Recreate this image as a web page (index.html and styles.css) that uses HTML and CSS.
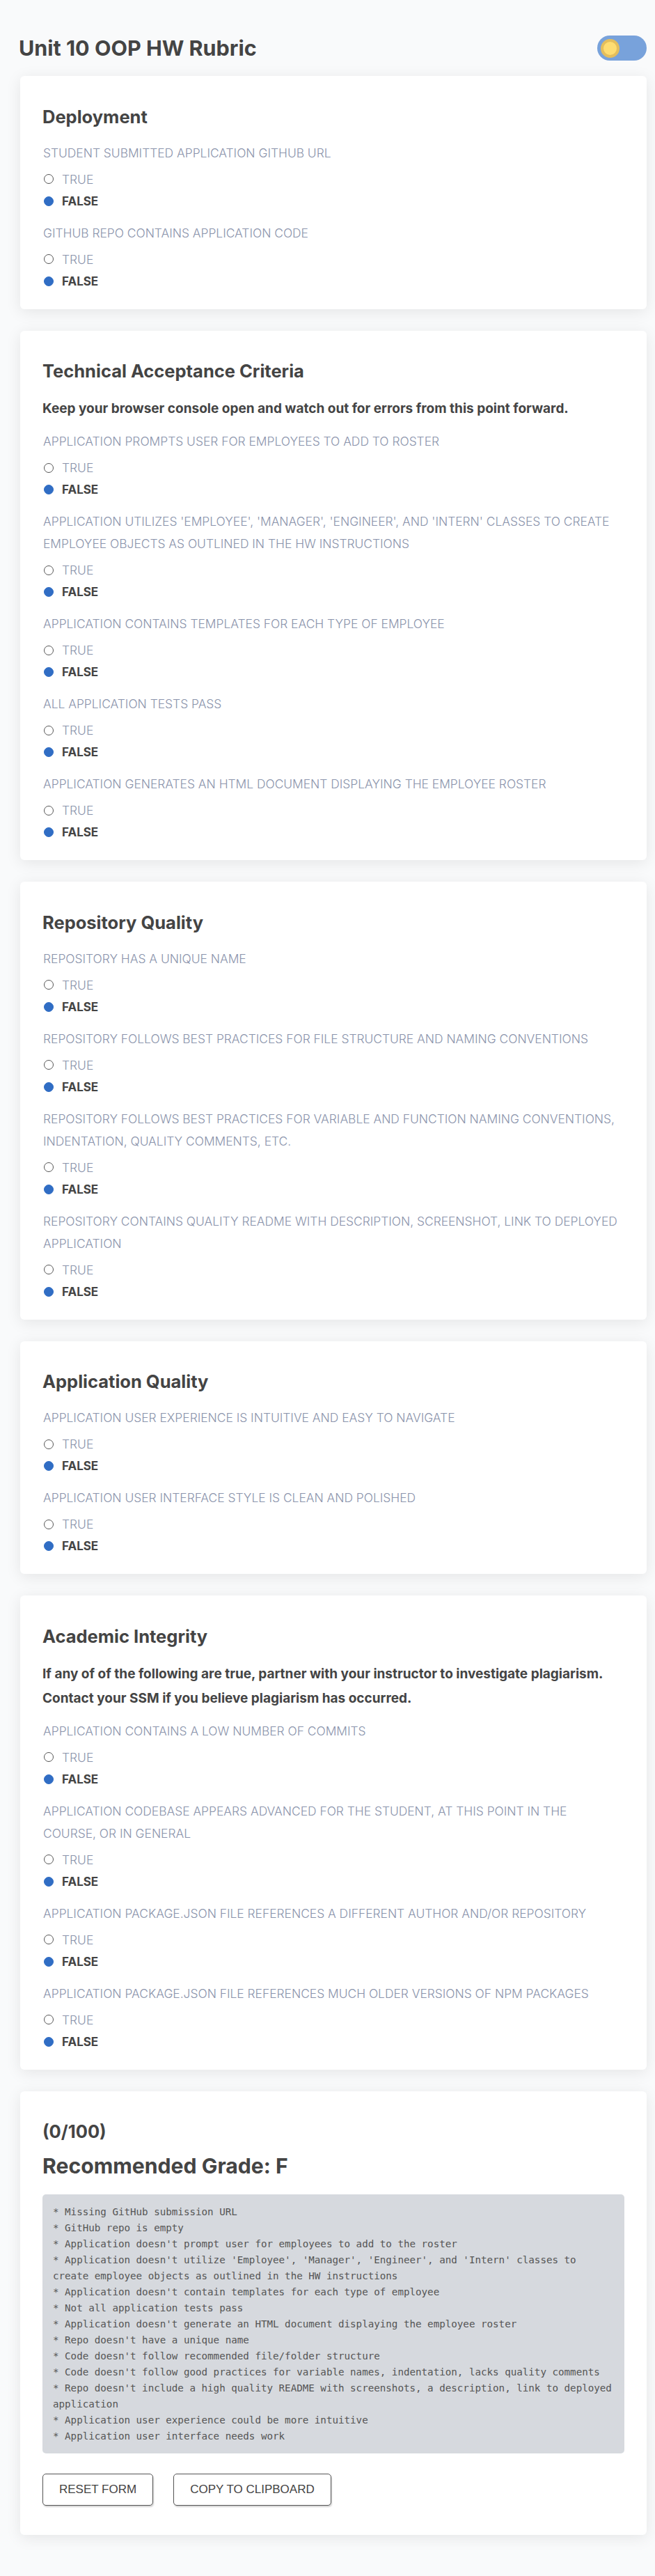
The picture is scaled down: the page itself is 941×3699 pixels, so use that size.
FILE: index.html
```html
<!DOCTYPE html>
<html lang="en">
<head>
<meta charset="utf-8">
<title>Unit 10 OOP HW Rubric</title>
<link rel="stylesheet" href="styles.css">
</head>
<body>
<div class="page">
  <header class="topbar">
    <h1 class="page-title">Unit 10 OOP HW Rubric</h1>
    <button class="theme-toggle" type="button" aria-label="Toggle theme"><span class="toggle-knob"></span></button>
  </header>

  <section class="card">
    <h2 class="card-title">Deployment</h2>
    <div class="question">
      <p class="q-label">STUDENT SUBMITTED APPLICATION GITHUB URL</p>
      <div class="options">
        <div class="option"><span class="radio"></span><span class="opt-text">TRUE</span></div>
        <div class="option is-selected"><span class="radio"></span><span class="opt-text">FALSE</span></div>
      </div>
    </div>
    <div class="question">
      <p class="q-label">GITHUB REPO CONTAINS APPLICATION CODE</p>
      <div class="options">
        <div class="option"><span class="radio"></span><span class="opt-text">TRUE</span></div>
        <div class="option is-selected"><span class="radio"></span><span class="opt-text">FALSE</span></div>
      </div>
    </div>
  </section>

  <section class="card">
    <h2 class="card-title">Technical Acceptance Criteria</h2>
    <p class="note">Keep your browser console open and watch out for errors from this point forward.</p>
    <div class="question">
      <p class="q-label">APPLICATION PROMPTS USER FOR EMPLOYEES TO ADD TO ROSTER</p>
      <div class="options">
        <div class="option"><span class="radio"></span><span class="opt-text">TRUE</span></div>
        <div class="option is-selected"><span class="radio"></span><span class="opt-text">FALSE</span></div>
      </div>
    </div>
    <div class="question">
      <p class="q-label">APPLICATION UTILIZES 'EMPLOYEE', 'MANAGER', 'ENGINEER', AND 'INTERN' CLASSES TO CREATE EMPLOYEE OBJECTS AS OUTLINED IN THE HW INSTRUCTIONS</p>
      <div class="options">
        <div class="option"><span class="radio"></span><span class="opt-text">TRUE</span></div>
        <div class="option is-selected"><span class="radio"></span><span class="opt-text">FALSE</span></div>
      </div>
    </div>
    <div class="question">
      <p class="q-label">APPLICATION CONTAINS TEMPLATES FOR EACH TYPE OF EMPLOYEE</p>
      <div class="options">
        <div class="option"><span class="radio"></span><span class="opt-text">TRUE</span></div>
        <div class="option is-selected"><span class="radio"></span><span class="opt-text">FALSE</span></div>
      </div>
    </div>
    <div class="question">
      <p class="q-label">ALL APPLICATION TESTS PASS</p>
      <div class="options">
        <div class="option"><span class="radio"></span><span class="opt-text">TRUE</span></div>
        <div class="option is-selected"><span class="radio"></span><span class="opt-text">FALSE</span></div>
      </div>
    </div>
    <div class="question">
      <p class="q-label">APPLICATION GENERATES AN HTML DOCUMENT DISPLAYING THE EMPLOYEE ROSTER</p>
      <div class="options">
        <div class="option"><span class="radio"></span><span class="opt-text">TRUE</span></div>
        <div class="option is-selected"><span class="radio"></span><span class="opt-text">FALSE</span></div>
      </div>
    </div>
  </section>

  <section class="card">
    <h2 class="card-title">Repository Quality</h2>
    <div class="question">
      <p class="q-label">REPOSITORY HAS A UNIQUE NAME</p>
      <div class="options">
        <div class="option"><span class="radio"></span><span class="opt-text">TRUE</span></div>
        <div class="option is-selected"><span class="radio"></span><span class="opt-text">FALSE</span></div>
      </div>
    </div>
    <div class="question">
      <p class="q-label">REPOSITORY FOLLOWS BEST PRACTICES FOR FILE STRUCTURE AND NAMING CONVENTIONS</p>
      <div class="options">
        <div class="option"><span class="radio"></span><span class="opt-text">TRUE</span></div>
        <div class="option is-selected"><span class="radio"></span><span class="opt-text">FALSE</span></div>
      </div>
    </div>
    <div class="question">
      <p class="q-label">REPOSITORY FOLLOWS BEST PRACTICES FOR VARIABLE AND FUNCTION NAMING CONVENTIONS, INDENTATION, QUALITY COMMENTS, ETC.</p>
      <div class="options">
        <div class="option"><span class="radio"></span><span class="opt-text">TRUE</span></div>
        <div class="option is-selected"><span class="radio"></span><span class="opt-text">FALSE</span></div>
      </div>
    </div>
    <div class="question">
      <p class="q-label">REPOSITORY CONTAINS QUALITY README WITH DESCRIPTION, SCREENSHOT, LINK TO DEPLOYED APPLICATION</p>
      <div class="options">
        <div class="option"><span class="radio"></span><span class="opt-text">TRUE</span></div>
        <div class="option is-selected"><span class="radio"></span><span class="opt-text">FALSE</span></div>
      </div>
    </div>
  </section>

  <section class="card">
    <h2 class="card-title">Application Quality</h2>
    <div class="question">
      <p class="q-label">APPLICATION USER EXPERIENCE IS INTUITIVE AND EASY TO NAVIGATE</p>
      <div class="options">
        <div class="option"><span class="radio"></span><span class="opt-text">TRUE</span></div>
        <div class="option is-selected"><span class="radio"></span><span class="opt-text">FALSE</span></div>
      </div>
    </div>
    <div class="question">
      <p class="q-label">APPLICATION USER INTERFACE STYLE IS CLEAN AND POLISHED</p>
      <div class="options">
        <div class="option"><span class="radio"></span><span class="opt-text">TRUE</span></div>
        <div class="option is-selected"><span class="radio"></span><span class="opt-text">FALSE</span></div>
      </div>
    </div>
  </section>

  <section class="card">
    <h2 class="card-title">Academic Integrity</h2>
    <p class="note">If any of of the following are true, partner with your instructor to investigate plagiarism. Contact your SSM if you believe plagiarism has occurred.</p>
    <div class="question">
      <p class="q-label">APPLICATION CONTAINS A LOW NUMBER OF COMMITS</p>
      <div class="options">
        <div class="option"><span class="radio"></span><span class="opt-text">TRUE</span></div>
        <div class="option is-selected"><span class="radio"></span><span class="opt-text">FALSE</span></div>
      </div>
    </div>
    <div class="question">
      <p class="q-label">APPLICATION CODEBASE APPEARS ADVANCED FOR THE STUDENT, AT THIS POINT IN THE COURSE, OR IN GENERAL</p>
      <div class="options">
        <div class="option"><span class="radio"></span><span class="opt-text">TRUE</span></div>
        <div class="option is-selected"><span class="radio"></span><span class="opt-text">FALSE</span></div>
      </div>
    </div>
    <div class="question">
      <p class="q-label">APPLICATION PACKAGE.JSON FILE REFERENCES A DIFFERENT AUTHOR AND/OR REPOSITORY</p>
      <div class="options">
        <div class="option"><span class="radio"></span><span class="opt-text">TRUE</span></div>
        <div class="option is-selected"><span class="radio"></span><span class="opt-text">FALSE</span></div>
      </div>
    </div>
    <div class="question">
      <p class="q-label">APPLICATION PACKAGE.JSON FILE REFERENCES MUCH OLDER VERSIONS OF NPM PACKAGES</p>
      <div class="options">
        <div class="option"><span class="radio"></span><span class="opt-text">TRUE</span></div>
        <div class="option is-selected"><span class="radio"></span><span class="opt-text">FALSE</span></div>
      </div>
    </div>
  </section>

  <section class="card summary">
    <h2 class="card-title score">(0/100)</h2>
    <h2 class="grade">Recommended Grade: F</h2>
    <pre class="feedback">* Missing GitHub submission URL
* GitHub repo is empty
* Application doesn't prompt user for employees to add to the roster
* Application doesn't utilize 'Employee', 'Manager', 'Engineer', and 'Intern' classes to create employee objects as outlined in the HW instructions
* Application doesn't contain templates for each type of employee
* Not all application tests pass
* Application doesn't generate an HTML document displaying the employee roster
* Repo doesn't have a unique name
* Code doesn't follow recommended file/folder structure
* Code doesn't follow good practices for variable names, indentation, lacks quality comments
* Repo doesn't include a high quality README with screenshots, a description, link to deployed application
* Application user experience could be more intuitive
* Application user interface needs work</pre>
    <div class="actions">
      <button class="btn" type="button">RESET FORM</button>
      <button class="btn" type="button">COPY TO CLIPBOARD</button>
    </div>
  </section>
</div>
</body>
</html>
```
FILE: styles.css
```css
* { box-sizing: border-box; }

html, body {
  margin: 0;
  padding: 0;
  background: #f9fafb;
}

body {
  font-family: "Inter", "Noto Sans", sans-serif;
  color: #444444;
}

.page {
  width: 900px;
  margin-left: 29px;
  padding: 51px 0 59px;
  display: flex;
  flex-direction: column;
  gap: 31px;
}

.topbar {
  display: flex;
  align-items: center;
  justify-content: space-between;
  height: 36px;
  margin-bottom: -9px;
}

.page-title {
  margin: 0 0 0 -2px;
  font-size: 30.5px;
  line-height: 36px;
  font-weight: 700;
  color: #444444;
}

.theme-toggle {
  width: 71px;
  height: 36px;
  border: none;
  border-radius: 18px;
  background: #78a2db;
  padding: 0 0 0 5px;
  display: flex;
  align-items: center;
  cursor: pointer;
}

.toggle-knob {
  width: 27px;
  height: 27px;
  border-radius: 50%;
  background: #fedd72;
  border: 4px solid #e4be5c;
}

.card {
  background: #ffffff;
  border-radius: 6px;
  box-shadow: 0 4px 22px rgba(0, 0, 0, 0.085);
  padding: 42.5px 32px 24px;
  display: flex;
  flex-direction: column;
  gap: 14px;
}

.card-title {
  margin: 0 0 6px;
  font-size: 25.5px;
  line-height: 32px;
  font-weight: 700;
  color: #444444;
}

.note {
  margin: 0;
  font-size: 19px;
  line-height: 35px;
  font-weight: 700;
  color: #444444;
}

.question {
  padding-left: 1px;
  padding-right: 6px;
}

.q-label {
  margin: 0;
  font-size: 17.4px;
  line-height: 32px;
  font-weight: 300;
  color: #8a93ab;
}

.options {
  margin-top: 6px;
}

.option {
  display: flex;
  align-items: center;
  gap: 12px;
  height: 31.5px;
}

.radio {
  width: 14px;
  height: 14px;
  margin-left: 1px;
  border-radius: 50%;
  border: 1.5px solid #555555;
  background: #ffffff;
  flex: none;
}

.opt-text {
  font-size: 17.4px;
  font-weight: 300;
  color: #8a93ab;
}

.option.is-selected .radio {
  border-color: #306dc4;
  background: #306dc4;
}

.option.is-selected .opt-text {
  font-weight: 700;
  color: #444444;
  font-size: 17px;
}

.summary {
  gap: 0;
  padding-bottom: 42px;
}

.score {
  margin: 0;
}

.grade {
  margin: 12.7px 0 0;
  font-size: 30.2px;
  line-height: 40px;
  font-weight: 700;
  color: #444444;
}

.feedback {
  margin: 21.5px 0 0;
  padding: 14px 12px 13px 15px;
  background: #d6d9de;
  border-radius: 5px;
  font-family: "DejaVu Sans Mono", monospace;
  font-size: 14.2px;
  line-height: 23px;
  color: #555555;
  white-space: pre-wrap;
  word-wrap: break-word;
}

.actions {
  display: flex;
  gap: 29px;
  margin-top: 29px;
}

.btn {
  height: 46px;
  padding: 0 23px;
  background: #ffffff;
  border: 1px solid #555555;
  border-radius: 5px;
  box-shadow: 1px 2px 2px rgba(0, 0, 0, 0.18);
  font-family: "Liberation Sans", Arial, sans-serif;
  font-size: 17px;
  color: #444444;
  cursor: pointer;
}
```
